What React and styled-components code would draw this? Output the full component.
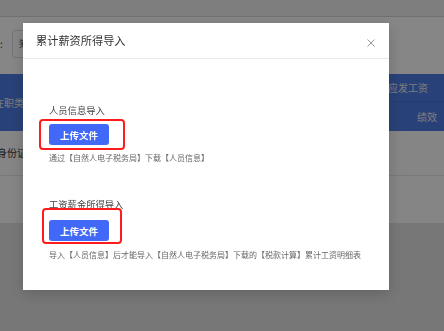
import React from "react";
import styled, { createGlobalStyle } from "styled-components";

const Global = createGlobalStyle`
  html, body { margin: 0; padding: 0; }
  body {
    font-family: "Noto Sans CJK SC", "Noto Sans", sans-serif;
    background: #e4e4e4;
    overflow: hidden;
  }
`;

const Page = styled.div`
  width: 444px;
  height: 331px;
  display: flex;
  flex-direction: column;
  background: #e3e3e3;
  overflow: hidden;
`;

const TopBar = styled.div`
  height: 16px;
  background: #efefef;
  border-bottom: 1px solid #d6d6d6;
  flex: none;
`;

const FilterArea = styled.div`
  height: 57px;
  background: #ffffff;
  display: flex;
  align-items: center;
  gap: 9px;
  padding-bottom: 4px;
  box-sizing: border-box;
  flex: none;
  margin-left: -10px;
`;

const FilterLabel = styled.span`
  font-size: 10px;
  color: #333;
  line-height: 1;
`;

const FilterInput = styled.div`
  width: 120px;
  height: 28px;
  border: 1px solid #dcdcdc;
  border-radius: 3px;
  box-sizing: border-box;
  font-size: 10px;
  color: #555;
  display: flex;
  align-items: center;
  padding-left: 6px;
`;

const TableHead = styled.div`
  height: 57px;
  background: #4f7de6;
  display: grid;
  grid-template-columns: 1fr auto;
  grid-template-rows: 28px 29px;
  flex: none;
  color: #ececec;
  font-size: 10px;
`;

const HeadLeft = styled.div`
  grid-row: 1 / span 2;
  display: flex;
  align-items: center;
  margin-left: -6px;
`;

const HeadCell = styled.div`
  display: flex;
  align-items: center;
  justify-content: flex-end;
  padding-right: ${(p) => p.$pr}px;
  border-bottom: ${(p) => (p.$line ? "1px solid #4672d8" : "none")};
`;

const BodyRow = styled.div`
  height: 43px;
  background: #fdfdfd;
  border-bottom: 1px solid #e6e6e6;
  display: flex;
  align-items: center;
  font-size: 10px;
  color: #333;
  flex: none;
  padding-bottom: 1px;
  margin-left: -3px;
`;

const BodyRest = styled.div`
  height: 47px;
  background: #fdfdfd;
  flex: none;
`;

const Mask = styled.div`
  position: fixed;
  inset: 0;
  background: rgba(0, 0, 0, 0.475);
`;

const Dialog = styled.div`
  position: fixed;
  left: 23px;
  top: 23px;
  width: 366px;
  height: 267px;
  background: #fff;
  box-shadow: 0 4px 14px rgba(0, 0, 0, 0.18);
  display: flex;
  flex-direction: column;
`;

const DialogHeader = styled.div`
  height: 36px;
  border-bottom: 1px solid #e8e8ee;
  display: flex;
  align-items: center;
  justify-content: space-between;
  padding: 1px 14px 0 13px;
  box-sizing: border-box;
  flex: none;
`;

const Title = styled.div`
  font-size: 11.2px;
  color: #333;
  line-height: 1;
`;

const Close = styled.svg`
  width: 8px;
  height: 8px;
  margin-top: 4px;
`;

const DialogBody = styled.div`
  padding: 44.5px 0 0 26px;
  display: flex;
  flex-direction: column;
`;

const Label = styled.div`
  font-size: 9.3px;
  line-height: 13px;
  color: #444;
  margin-top: ${(p) => p.$mt || 0}px;
`;

const ButtonWrap = styled.div`
  position: relative;
  align-self: flex-start;
  margin-top: ${(p) => p.$mt}px;
`;

const Frame = styled.span`
  position: absolute;
  top: ${(p) => p.$t}px;
  bottom: ${(p) => p.$b}px;
  left: ${(p) => p.$l}px;
  right: ${(p) => p.$r}px;
  border: 2px solid #ff1c1c;
  border-radius: 4px;
  pointer-events: none;
`;

const Upload = styled.button`
  width: 60px;
  height: 21px;
  border: none;
  border-radius: 3px;
  background: #4168f7;
  color: #fff;
  font-family: inherit;
  font-size: 9.5px;
  font-weight: 600;
  padding: 0;
  display: flex;
  align-items: center;
  justify-content: center;
`;

const Hint = styled.div`
  font-size: 8px;
  line-height: 11px;
  color: #666;
  margin-top: ${(p) => p.$mt}px;
  white-space: nowrap;
`;

export default function App() {
  return (
    <>
      <Global />
      <Page>
        <TopBar />
        <FilterArea>
          <FilterLabel>类:</FilterLabel>
          <FilterInput>筹资</FilterInput>
        </FilterArea>
        <TableHead>
          <HeadLeft>在职类型</HeadLeft>
          <HeadCell $pr={16} $line>应发工资</HeadCell>
          <HeadCell $pr={7}>绩效</HeadCell>
        </TableHead>
        <BodyRow>身份证号</BodyRow>
        <BodyRest />
      </Page>
      <Mask />
      <Dialog>
        <DialogHeader>
          <Title>累计薪资所得导入</Title>
          <Close viewBox="0 0 8 8">
            <path d="M0.5 0.5 L7.5 7.5 M7.5 0.5 L0.5 7.5" stroke="#999" strokeWidth="1" fill="none" />
          </Close>
        </DialogHeader>
        <DialogBody>
          <Label>人员信息导入</Label>
          <ButtonWrap $mt={7.5}>
            <Upload>上传文件</Upload>
            <Frame $t={-5} $b={-5} $l={-10} $r={-16} />
          </ButtonWrap>
          <Hint $mt={6.5}>通过【自然人电子税务局】下载【人员信息】</Hint>
          <Label $mt={35}>工资薪金所得导入</Label>
          <ButtonWrap $mt={9.5}>
            <Upload>上传文件</Upload>
            <Frame $t={-12} $b={-3} $l={-7} $r={-13} />
          </ButtonWrap>
          <Hint $mt={7.5}>导入【人员信息】后才能导入【自然人电子税务局】下载的【税款计算】累计工资明细表</Hint>
        </DialogBody>
      </Dialog>
    </>
  );
}
